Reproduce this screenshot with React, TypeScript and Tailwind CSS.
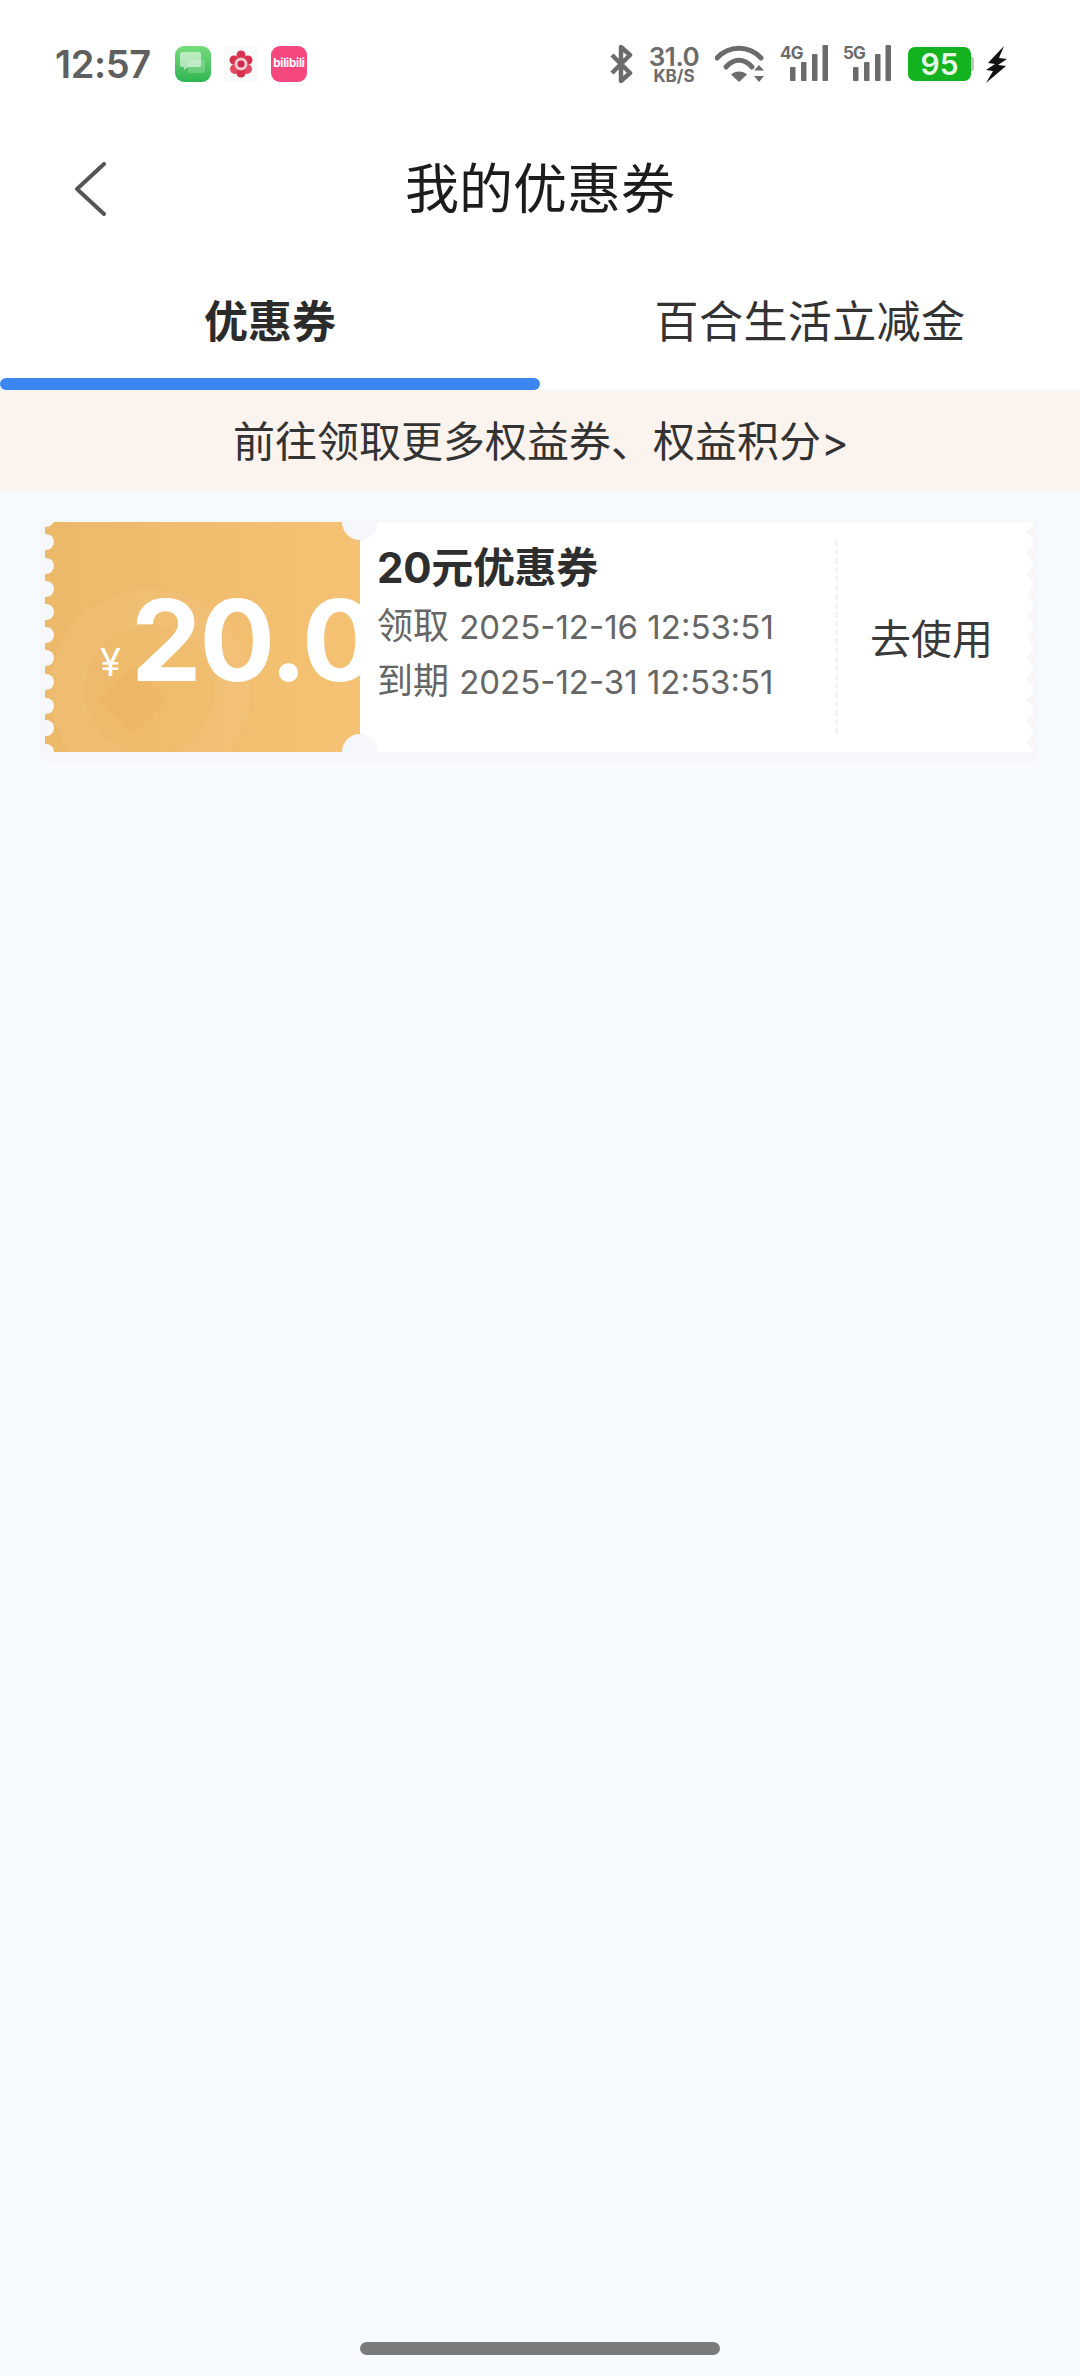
import React from 'react';

const FONT = 'font-[Inter,"Noto_Sans_CJK_SC",sans-serif]';

const Signal: React.FC<{ label: string }> = ({ label }) => (
  <svg width="48" height="44" viewBox="0 -6 48 44" className="shrink-0 -mt-[6px]">
    <text x="0" y="14" fontSize="17" fontWeight="700" fill="#6b6b6b" fontFamily="Inter" letterSpacing="-0.8">
      {label}
    </text>
    <rect x="10" y="22" width="5.5" height="14" rx="1" fill="#6b6b6b" />
    <rect x="21" y="17" width="5.5" height="19" rx="1" fill="#6b6b6b" />
    <rect x="32" y="9" width="5.5" height="27" rx="1" fill="#6b6b6b" />
    <rect x="42.5" y="0" width="5.5" height="36" rx="1" fill="#6b6b6b" />
  </svg>
);

const StatusBar: React.FC = () => (
  <div className="h-[126px] flex items-center justify-between pl-[55px] pr-[73px] pt-[2px]">
    <div className="flex items-center">
      <span className="text-[38px] leading-none font-semibold text-[#5f5f5f] w-[120px] tracking-[-0.4px]">12:57</span>
      <div className="w-[36px] h-[36px] rounded-[9px] bg-gradient-to-b from-[#74dd7c] to-[#2bb552] flex items-center justify-center">
        <svg width="28" height="26" viewBox="0 0 28 26">
          <rect x="9" y="9" width="17" height="13" rx="2" fill="#ffffff" opacity="0.2" />
          <path d="M3 1h17a2 2 0 0 1 2 2v11a2 2 0 0 1-2 2H9l-4 3v-3H3a2 2 0 0 1-2-2V3a2 2 0 0 1 2-2z" fill="#ffffff" opacity="0.55" />
        </svg>
      </div>
      <div className="ml-[13px] w-[34px] h-[36px] bg-[#fafafa] flex items-center justify-center">
        <svg width="24" height="28" viewBox="0 0 24 28">
          <circle cx="12" cy="5" r="4.5" fill="#d8324f" />
          <circle cx="5" cy="10" r="4.5" fill="#d8324f" />
          <circle cx="19" cy="10" r="4.5" fill="#d8324f" />
          <circle cx="6" cy="19" r="5" fill="#e24a63" />
          <circle cx="18" cy="19" r="5" fill="#e24a63" />
          <circle cx="12" cy="23" r="4.5" fill="#d8324f" />
          <circle cx="12" cy="14" r="6.5" fill="#f6c9d0" />
          <circle cx="12" cy="14" r="3.5" fill="#cf2a48" />
        </svg>
      </div>
      <div className="ml-[13px] w-[36px] h-[36px] rounded-[9px] bg-[#f4487f] flex items-center justify-center overflow-hidden">
        <span className="text-[11.5px] leading-none font-bold text-white tracking-[-0.2px]">bilibili</span>
      </div>
    </div>
    <div className="flex items-center">
      <svg width="24" height="38" viewBox="0 0 24 38" className="shrink-0">
        <path d="M3 10l18 18-9 8V2l9 8-18 18" fill="none" stroke="#6b6b6b" strokeWidth="4.5" strokeLinejoin="round" />
      </svg>
      <div className="ml-[15px] w-[52px] flex flex-col items-center text-[#6b6b6b] font-semibold">
        <span className="text-[26px] leading-[22px] tracking-[-0.4px]">31.0</span>
        <span className="text-[17px] leading-[14px] font-bold mt-[1px]">KB/S</span>
      </div>
      <svg width="50" height="38" viewBox="0 0 50 38" className="ml-[15px] shrink-0">
        <path d="M2 13C14 0 34 0 46 13" fill="none" stroke="#6b6b6b" strokeWidth="5" strokeLinecap="round" />
        <path d="M11 22C19 13 29 13 37 22" fill="none" stroke="#6b6b6b" strokeWidth="5" strokeLinecap="round" />
        <path d="M24 37l-8-7.5c4-4 12-4 16 0z" fill="#6b6b6b" />
        <path d="M44 20l5 5.5H39zM44 37l5-6H39z" fill="#6b6b6b" />
      </svg>
      <div className="ml-[15px] flex">
        <Signal label="4G" />
      </div>
      <div className="ml-[15px] flex">
        <Signal label="5G" />
      </div>
      <div className="ml-[17px] w-[63px] h-[34px] rounded-[7px] bg-[#12b31f] flex items-center justify-center">
        <span className="text-[30px] leading-none font-semibold text-[#e6f7e6]">95</span>
      </div>
      <div className="w-[3px] h-[14px] bg-[#b5c9b5] rounded-r-[2px]" />
      <svg width="22" height="37" viewBox="0 0 22 37" className="ml-[11px] shrink-0">
        <path d="M19 0L3 17l7 1-9 6 7 1-7 12 20-17-8-1 9-6-8-1z" fill="#111111" />
      </svg>
    </div>
  </div>
);

const NavBar: React.FC = () => (
  <div className="relative h-[128px] flex items-center justify-center">
    <svg width="34" height="54" viewBox="0 0 34 54" className="absolute left-[73px] top-[36px]">
      <path d="M31 2L4 27l27 25" fill="none" stroke="#555555" strokeWidth="4" strokeLinecap="round" strokeLinejoin="round" />
    </svg>
    <span className="text-[54px] leading-none text-[#1c1c1c]">我的优惠券</span>
  </div>
);

const Tabs: React.FC = () => (
  <div className="h-[136px] flex">
    <div className="relative w-1/2 flex items-center justify-center">
      <span className="text-[44px] leading-none font-bold text-[#2b2b2b]">优惠券</span>
      <div className="absolute left-0 right-0 bottom-0 h-[12px] rounded-full bg-[#3b86f0]" />
    </div>
    <div className="w-1/2 flex items-center justify-center">
      <span className="text-[44px] leading-none text-[#333333] tracking-[0.4px]">百合生活立减金</span>
    </div>
  </div>
);

const Ticket: React.FC = () => {
  const scallops = [-3, 20, 44, 67, 90, 113, 136, 160, 184, 206, 230];
  const right = [10, 31, 52, 73, 94, 115, 136, 157, 178, 199, 220];
  return (
    <div className="ml-[40px] w-[998px] px-[5px] pt-[2px] pb-[10px] bg-[#f5f7fa] rounded-[4px]">
      <div className="relative h-[230px] flex overflow-hidden">
        <div className="relative w-[315px] h-full overflow-hidden bg-gradient-to-r from-[#ecb869] to-[#f5c172] text-white">
          <svg width="315" height="230" viewBox="0 0 315 230" className="absolute left-0 top-0">
            <circle cx="105" cy="168" r="83" fill="none" stroke="#ffffff" strokeOpacity="0.06" strokeWidth="36" />
            <path d="M88 143l35 35-35 35-35-35z" fill="#e8b25f" fillOpacity="0.4" />
            {scallops.map((y) => (
              <circle key={y} cx="1" cy={y} r="8" fill="#f5f7fa" />
            ))}
          </svg>
          <span className="absolute left-[55px] top-[120px] text-[38px] leading-[40px] font-normal">¥</span>
          <span className="absolute left-[86px] top-[53px] text-[112px] leading-[130px] font-bold tracking-[-2px] whitespace-nowrap">20.0</span>
        </div>
        <div className="flex-1 bg-white flex">
          <div className="w-[475px] pl-[17px] pt-[21px] flex flex-col">
            <div className="text-[42px] leading-[50px] font-bold text-[#2e2e2e] tracking-[-0.3px]">20元优惠券</div>
            <div className="mt-[6px] text-[36px] leading-[54px] text-[#666666] whitespace-nowrap">
              领取 <span className="text-[33px]">2025-12-16 12:53:51</span>
            </div>
            <div className="text-[36px] leading-[54px] text-[#666666] whitespace-nowrap">
              到期 <span className="text-[33px]">2025-12-31 12:53:51</span>
            </div>
          </div>
          <div className="my-[18px] w-0 border-l-[3px] border-dashed border-[#f8f5e6]" />
          <div className="flex-1 flex items-center justify-center pr-[8px] pt-[4px]">
            <span className="text-[41px] leading-none text-[#3a3a3a]">去使用</span>
          </div>
        </div>
        <svg width="990" height="230" viewBox="0 0 990 230" className="absolute left-0 top-0 pointer-events-none">
          <circle cx="315" cy="0" r="18" fill="#f5f7fa" />
          <circle cx="315" cy="230" r="18" fill="#f5f7fa" />
          {right.map((y) => (
            <path key={y} d={`M990 ${y - 10}l-9 10 9 10z`} fill="#faf6f3" />
          ))}
        </svg>
      </div>
    </div>
  );
};

const App: React.FC = () => {
  return (
    <div className={`${FONT} w-[1080px] h-[2376px] bg-[#f7faff] flex flex-col overflow-hidden`}>
      <div className="bg-white">
        <StatusBar />
        <NavBar />
        <Tabs />
      </div>
      <div className="h-[101px] bg-[#fbf3ee] flex items-center justify-center pl-[2px] pt-[2px]">
        <span className="text-[42px] leading-none text-[#333333]">前往领取更多权益券、权益积分&gt;</span>
      </div>
      <div className="flex-1 pt-[29px]">
        <Ticket />
      </div>
      <div className="h-[34px] flex justify-center">
        <div className="w-[360px] h-[13px] rounded-full bg-[#7a7a7a]" />
      </div>
    </div>
  );
};

export default App;
